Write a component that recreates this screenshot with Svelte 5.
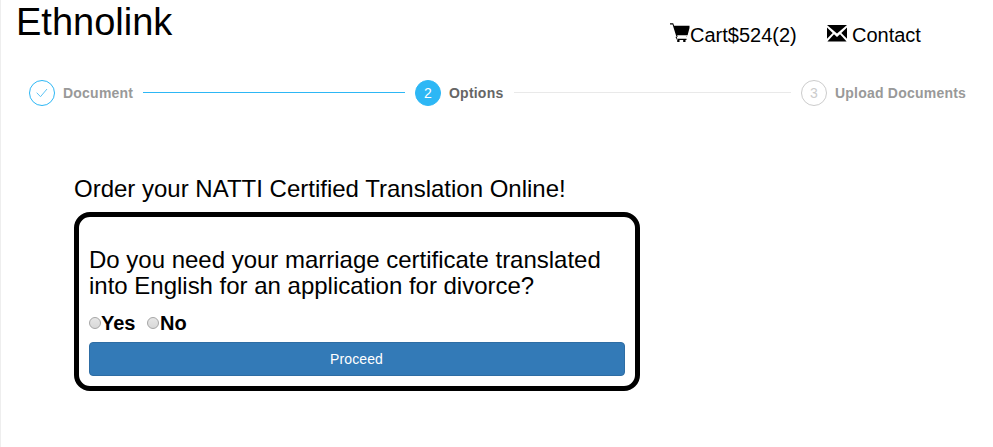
<script>
  let need = $state('');
</script>

<div class="page">
  <header>
    <h1>Ethnolink</h1>
    <nav>
      <a class="cart" href="#cart">
        <svg width="20" height="20" viewBox="0 0 20 20"><path d="M0 0.3h3.2l.9 2.5H19.5V5L17.6 12.2H7.2l.4 1.8H16.5v-.6 0H17v.6H6.5L2.6 1.5H0zM6.2 15.8h10.3v1.2H6.2zM5.6 14l1 3h.9L6.6 13zM7.2 17h2.3v2H7.2zM13.2 17h2.3v2h-2.3z" /></svg><span>Cart$524(2)</span>
      </a>
      <a class="contact" href="#contact">
        <svg width="20" height="17" viewBox="0 0 20 17"><path d="M0 0H20L10 8.6zM0 2.4L5.7 7.9 0 13.8zM20 2.4V13.8L14.3 7.9zM7 9.2L10 12 13 9.2 19.6 16.5H.4z" /></svg><span>Contact</span>
      </a>
    </nav>
  </header>

  <div class="steps">
    <div class="dot done">
      <svg width="12" height="10" viewBox="0 0 12 10"><path d="M.7 4.7L4.5 8.7 11 1" /></svg>
    </div>
    <span class="label first">Document</span>
    <i class="line blue"></i>
    <div class="dot active">2</div>
    <span class="label current">Options</span>
    <i class="line"></i>
    <div class="dot">3</div>
    <span class="label last">Upload Documents</span>
  </div>

  <main>
    <h2>Order your NATTI Certified Translation Online!</h2>
    <form onsubmit={(e) => e.preventDefault()}>
      <h3>Do you need your marriage certificate translated<br />into English for an application for divorce?</h3>
      <div class="choices">
        <label class="yes"><input type="radio" name="need" value="yes" bind:group={need} /><span>Yes</span></label>
        <label class="no"><input type="radio" name="need" value="no" bind:group={need} /><span>No</span></label>
      </div>
      <button>Proceed</button>
    </form>
  </main>
</div>

<style>
  .page {
    box-sizing: border-box;
    width: 993px;
    height: 447px;
    overflow: hidden;
    border-left: 1px solid #eee;
    background: #fff;
    color: #000;
    font-family: "Liberation Sans", Arial, sans-serif;
  }
  header {
    display: flex;
    height: 80px;
  }
  h1, h2, h3 {
    margin: 0;
    font-weight: 400;
    white-space: nowrap;
  }
  h1 {
    width: 653px;
    padding-left: 15px;
    font-size: 38px;
    line-height: 44px;
  }
  nav {
    display: flex;
    padding-top: 23px;
    font-size: 20px;
    line-height: 24px;
  }
  nav a {
    display: flex;
    color: #000;
    text-decoration: none;
    white-space: nowrap;
  }
  nav svg { display: block; }
  .cart { width: 157px; margin-left: 1px; }
  .contact svg { margin: 2px 5px 0 0; }
  .steps {
    display: flex;
    align-items: center;
    height: 26px;
    padding: 0 27px 0 28px;
  }
  .dot {
    box-sizing: border-box;
    display: flex;
    flex: none;
    align-items: center;
    justify-content: center;
    width: 26px;
    height: 26px;
    border: 1px solid #ccc;
    border-radius: 50%;
    color: #ccc;
    font-size: 14px;
  }
  .done { border-color: #2db7f5; }
  .done path { fill: none; stroke: #5cc4f5; stroke-width: 1; }
  .active {
    border-color: #2db7f5;
    background: #2db7f5;
    color: #fff;
  }
  .label {
    flex: none;
    margin: 0 10px 0 8px;
    color: #999;
    font-size: 14px;
    font-weight: 700;
    letter-spacing: 0.22px;
    line-height: 26px;
    white-space: nowrap;
  }
  .first { width: 70px; }
  .current { width: 55px; color: #666; }
  .last { width: 131px; margin-right: 0; }
  .line {
    flex: none;
    width: 277px;
    height: 1px;
    margin: 0 10px 1px 0;
    background: #e9e9e9;
  }
  .blue { width: 262px; background: #2db7f5; }
  main { padding: 70px 0 0 73px; }
  h2 {
    height: 36px;
    font-size: 24px;
    line-height: 26px;
  }
  form {
    box-sizing: border-box;
    width: 566px;
    height: 179px;
    padding: 30px 10px 10px;
    border: 5px solid #000;
    border-radius: 16px;
  }
  h3 {
    font-size: 24px;
    line-height: 26px;
    letter-spacing: -0.01px;
  }
  .choices {
    display: flex;
    height: 43px;
    padding-top: 10px;
    box-sizing: border-box;
    font-size: 20px;
    font-weight: 700;
    line-height: 28px;
  }
  label {
    display: flex;
    align-items: flex-start;
  }
  .yes { width: 58px; }
  .no { gap: 1px; }
  input {
    appearance: none;
    box-sizing: border-box;
    width: 12px;
    height: 12px;
    margin: 8px 0 0;
    border: 1px solid #a5a5a5;
    border-radius: 50%;
    background: linear-gradient(#e6e6e6, #d8d8d8);
  }
  input:checked { background: radial-gradient(#555 35%, #e6e6e6 40%); }
  button {
    display: block;
    width: 100%;
    height: 34px;
    padding: 0 1px 0 0;
    border: 1px solid #2e6da4;
    border-radius: 4px;
    background: #337ab7;
    color: #fff;
    font: 14px/20px "Liberation Sans", Arial, sans-serif;
    letter-spacing: 0.1px;
  }
</style>
